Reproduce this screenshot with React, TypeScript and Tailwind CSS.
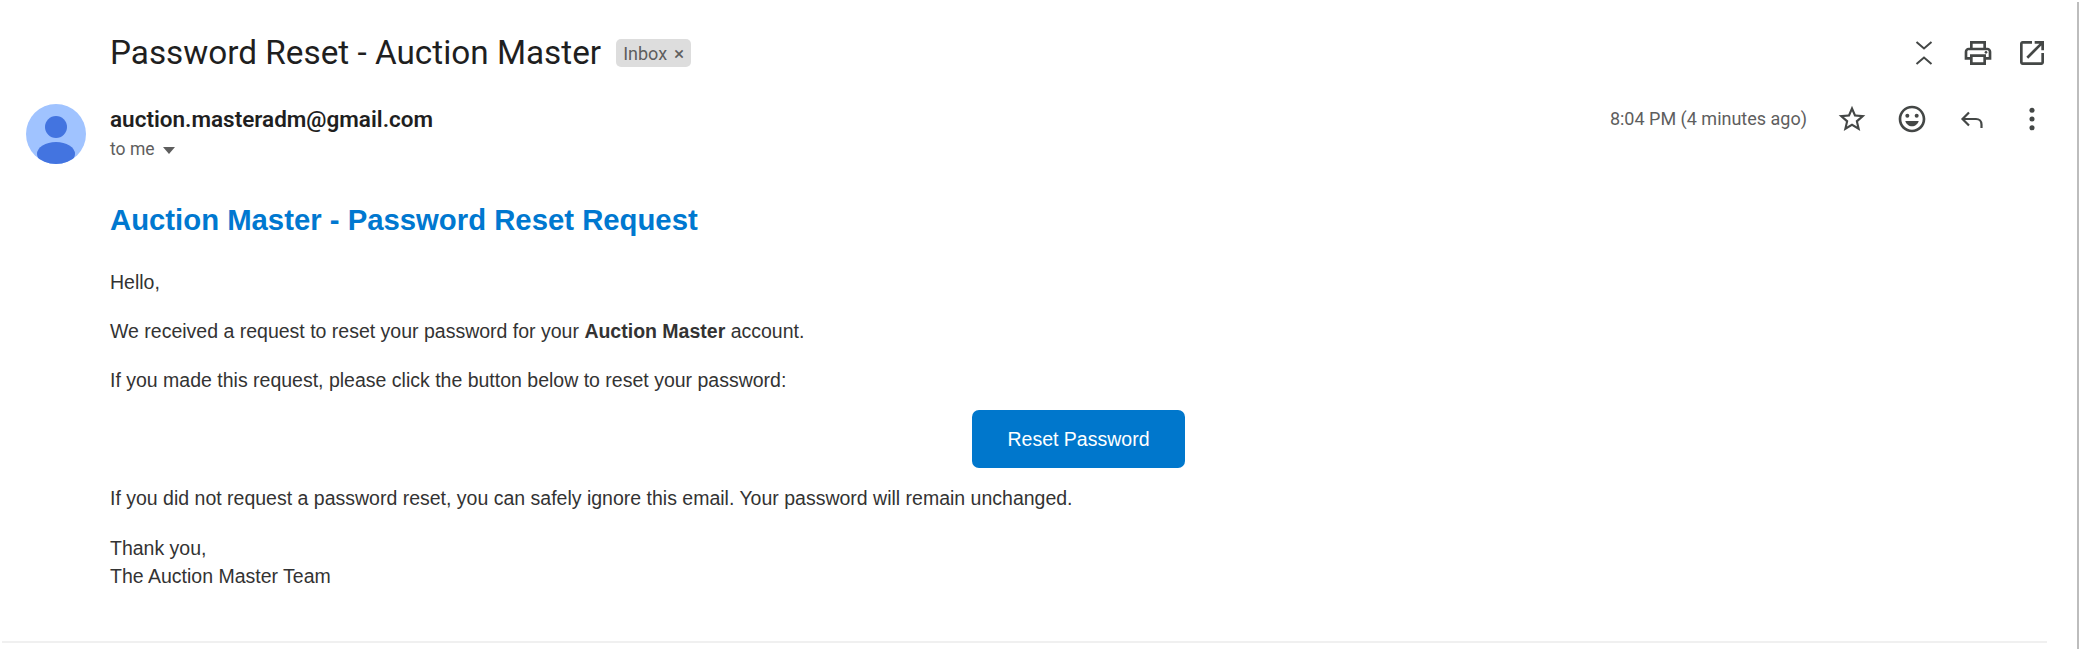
import React from 'react';

const Icon: React.FC<{ size?: number; children: React.ReactNode }> = ({ size = 32, children }) => (
    <svg width={size} height={size} viewBox="0 0 24 24" fill="#444746">{children}</svg>
);

const IconSlot: React.FC<{ className: string; children: React.ReactNode }> = ({ className, children }) => (
    <div className={`flex items-center justify-center ${className}`}>{children}</div>
);

const App: React.FC = () => {
    return (
        <div className="h-[649px] w-full overflow-hidden bg-white pt-[2px] pr-[2px] font-['Liberation_Sans',sans-serif]">
            <div className="h-[647px] border-r-2 border-[#bdbdbd]">
                <div className="h-[639px]">
                    {/* --- Subject row --- */}
                    <div className="flex items-center h-[50px] pt-[26px] box-content pl-[110px] pr-[18px]">
                        <h1 className="font-['Roboto',sans-serif] text-[33.300px] text-[#1f1f1f]">Password Reset - Auction Master</h1>
                        <span className="ml-[15px] flex items-center h-[28px] px-[7px] rounded-[5px] bg-[#dddddd] font-['Roboto',sans-serif] text-[18px] text-[#5e5e5e]">
                            Inbox
                            <span className="ml-[7px] text-[19px] leading-none">×</span>
                        </span>
                        <div className="ml-auto flex items-center">
                            <IconSlot className="w-[54px]">
                                <svg width="32" height="32" viewBox="0 0 32 32" fill="none" stroke="#444746" strokeWidth="2">
                                    <path d="M8.500 5l7.500 6.500L23.500 5M8.500 27l7.500-6.500 7.500 6.500" />
                                </svg>
                            </IconSlot>
                            <IconSlot className="w-[54px]">
                                <Icon>
                                    <path d="M19 8h-1V3H6v5H5c-1.660 0-3 1.340-3 3v6h4v4h12v-4h4v-6c0-1.660-1.340-3-3-3zM8 5h8v3H8V5zm8 12v2H8v-4h8v2zm2-2v-2H6v2H4v-4c0-.55.45-1 1-1h14c.55 0 1 .45 1 1v4h-2z" />
                                    <circle cx="18" cy="11.500" r="1" />
                                </Icon>
                            </IconSlot>
                            <IconSlot className="w-[54px]">
                                <Icon>
                                    <path d="M19 19H5V5h7V3H5c-1.110 0-2 .9-2 2v14c0 1.100.89 2 2 2h14c1.100 0 2-.9 2-2v-7h-2v7zM14 3v2h3.590l-9.830 9.830 1.410 1.410L19 6.410V10h2V3h-7z" />
                                </Icon>
                            </IconSlot>
                        </div>
                    </div>

                    {/* --- Sender row --- */}
                    <div className="flex mt-[26px] pl-[26px] pr-[15px]">
                        <svg width="60" height="60" viewBox="0 0 60 60" className="shrink-0">
                            <defs>
                                <clipPath id="avatar-clip">
                                    <circle cx="30" cy="30" r="30" />
                                </clipPath>
                            </defs>
                            <circle cx="30" cy="30" r="30" fill="#a0c3ff" />
                            <circle cx="30" cy="23" r="11" fill="#4374e0" />
                            <ellipse cx="30" cy="50" rx="19" ry="12" fill="#4374e0" clipPath="url(#avatar-clip)" />
                        </svg>
                        <div className="ml-[24px]">
                            <p className="mt-[1px] font-['Roboto',sans-serif] font-semibold text-[22.500px] leading-[28px] text-[#1f1f1f]">auction.masteradm@gmail.com</p>
                            <p className="flex items-center mt-[3px] font-['Roboto',sans-serif] text-[17.500px] leading-[26px] text-[#5e5e5e]">
                                to me
                                <span className="ml-[8px] mt-[2px] border-x-[6px] border-t-[7px] border-x-transparent border-t-[#5e5e5e]" />
                            </p>
                        </div>
                        <div className="ml-auto flex items-start h-[28px] mt-[1px]">
                            <span className="mr-[15px] font-['Roboto',sans-serif] text-[18px] leading-[28px] text-[#5e5e5e]">8:04 PM (4 minutes ago)</span>
                            <IconSlot className="w-[60px] h-[28px]">
                                <Icon>
                                    <path d="M22 9.240l-7.190-.62L12 2 9.190 8.630 2 9.240l5.460 4.730L5.820 21 12 17.270 18.180 21l-1.630-7.030L22 9.240zM12 15.400l-3.760 2.270 1-4.280-3.320-2.880 4.380-.38L12 6.100l1.710 4.040 4.380.38-3.320 2.880 1 4.280L12 15.400z" />
                                </Icon>
                            </IconSlot>
                            <IconSlot className="w-[60px] h-[28px]">
                                <Icon>
                                    <path d="M12 2C6.470 2 2 6.480 2 12s4.470 10 10 10c5.530 0 10-4.480 10-10S17.530 2 12 2zm0 18c-4.420 0-8-3.580-8-8s3.580-8 8-8 8 3.580 8 8-3.580 8-8 8z" />
                                    <circle cx="8.500" cy="9.500" r="1.500" />
                                    <circle cx="15.500" cy="9.500" r="1.500" />
                                    <path d="M7 13.500h10c-.6 2.400-2.700 4-5 4s-4.400-1.600-5-4z" />
                                </Icon>
                            </IconSlot>
                            <IconSlot className="w-[60px] h-[28px]">
                                <svg width="32" height="32" viewBox="0 0 32 32" fill="none" stroke="#444746" strokeWidth="2.200">
                                    <path d="M13 9.500l-6.500 6.500 6.500 6.500M6.500 16H20c3.300 0 5.500 2.400 5.500 5.500V25" />
                                </svg>
                            </IconSlot>
                            <IconSlot className="w-[60px] h-[28px]">
                                <Icon>
                                    <circle cx="12" cy="5.500" r="1.900" />
                                    <circle cx="12" cy="12" r="1.900" />
                                    <circle cx="12" cy="18.500" r="1.900" />
                                </Icon>
                            </IconSlot>
                        </div>
                    </div>

                    {/* --- Message body --- */}
                    <div className="ml-[110px] mr-[30px] mt-[37px] text-[#333333] text-[19.500px] leading-[28px]">
                        <h2 className="text-[29.300px] leading-[38px] font-bold text-[#0078d0]">Auction Master - Password Reset Request</h2>
                        <p className="mt-[29px]">Hello,</p>
                        <p className="mt-[21px]">We received a request to reset your password for your <strong>Auction Master</strong> account.</p>
                        <p className="mt-[21px]">If you made this request, please click the button below to reset your password:</p>
                        <div className="flex justify-center mt-[16px]">
                            <a href="#" className="flex items-center justify-center w-[213px] h-[58px] rounded-[7px] bg-[#0077cc] text-white text-[19.500px]">Reset Password</a>
                        </div>
                        <p className="mt-[16px]">If you did not request a password reset, you can safely ignore this email. Your password will remain unchanged.</p>
                        <p className="mt-[22px]">Thank you,<br />The Auction Master Team</p>
                    </div>
                </div>
                <div className="h-[2px] ml-[2px] mr-[30px] bg-[#f0f0f0]" />
            </div>
        </div>
    );
};

export default App;
